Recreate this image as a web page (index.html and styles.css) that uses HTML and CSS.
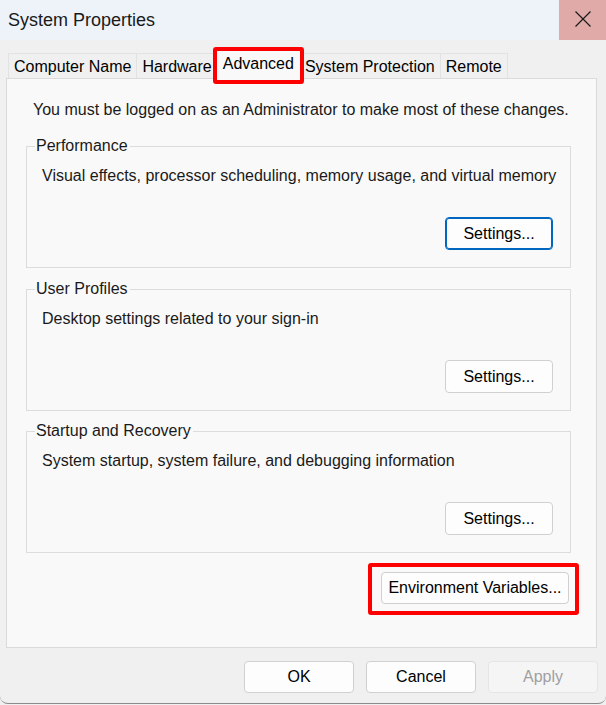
FILE: index.html
```html
<!DOCTYPE html>
<html>
<head>
<meta charset="utf-8">
<link rel="stylesheet" href="styles.css">
</head>
<body>
<div class="window">
  <div class="titlebar">
    <div class="title">System Properties</div>
    <div class="close">
      <svg width="16" height="16" viewBox="0 0 16 16"><path d="M0.5 0.5 L15.5 15.5 M15.5 0.5 L0.5 15.5" stroke="#1a1a1a" stroke-width="1.2" fill="none"/></svg>
    </div>
  </div>
  <div class="body">
    <div class="tabs">
      <div class="tab">Computer Name</div>
      <div class="tab">Hardware</div>
      <div class="tab selected">Advanced<span class="mark mark-tab"></span></div>
      <div class="tab">System Protection</div>
      <div class="tab">Remote</div>
    </div>
    <div class="panel">
      <p class="note">You must be logged on as an Administrator to make most of these changes.</p>
      <fieldset class="group first">
        <legend>Performance</legend>
        <p class="desc">Visual effects, processor scheduling, memory usage, and virtual memory</p>
        <div class="actions"><button class="btn focused">Settings...</button></div>
      </fieldset>
      <fieldset class="group">
        <legend>User Profiles</legend>
        <p class="desc">Desktop settings related to your sign-in</p>
        <div class="actions"><button class="btn">Settings...</button></div>
      </fieldset>
      <fieldset class="group">
        <legend>Startup and Recovery</legend>
        <p class="desc">System startup, system failure, and debugging information</p>
        <div class="actions"><button class="btn">Settings...</button></div>
      </fieldset>
      <div class="env-row">
        <div class="env-wrap"><button class="btn env">Environment Variables...</button><span class="mark mark-env"></span></div>
      </div>
    </div>
    <div class="footer">
      <button class="btn dlg">OK</button>
      <button class="btn dlg">Cancel</button>
      <button class="btn dlg disabled">Apply</button>
    </div>
  </div>
</div>
</body>
</html>
```
FILE: styles.css
```css
* { box-sizing: border-box; }
html, body { margin: 0; padding: 0; }
body {
  width: 606px;
  height: 705px;
  overflow: hidden;
  background: #f0f0f0;
  font-family: "Liberation Sans", Arial, sans-serif;
  font-size: 16px;
  color: #000;
}
.window {
  width: 606px;
  height: 704px;
  background: #f0f0f0;
  border-bottom: 1px solid #8a8a8a;
  border-bottom-left-radius: 8px;
  border-bottom-right-radius: 8px;
  display: flex;
  flex-direction: column;
}
.titlebar {
  height: 40px;
  background: #eef3fa;
  display: flex;
  align-items: center;
  justify-content: space-between;
}
.title {
  padding-left: 8px;
  font-size: 18px;
  color: #1a1a1a;
}
.close {
  width: 47px;
  height: 40px;
  background: #e0aaa9;
  display: flex;
  align-items: center;
  justify-content: center;
}
.close svg { display: block; margin-top: -3px; }
.body {
  padding: 13px 9px 0 6px;
  display: flex;
  flex-direction: column;
}
.tabs {
  display: flex;
  height: 25px;
  padding-left: 2px;
  position: relative;
  z-index: 2;
}
.tab {
  height: 25px;
  line-height: 25px;
  padding: 0 5px;
  border: 1px solid #e2e2e2;
  border-bottom: none;
  border-right: none;
  background: #f0f0f0;
  color: #000;
  white-space: nowrap;
  position: relative;
}
.tab:last-child { border-right: 1px solid #e2e2e2; }
.tab.selected {
  height: 30px;
  margin-top: -4px;
  margin-left: -2px;
  margin-right: -2px;
  padding: 0 7px;
  line-height: 28px;
  background: #f9f9f9;
  border: 1px solid #dadada;
  border-bottom: none;
  z-index: 3;
}
.tab.selected + .tab { border-left: none; }
.mark {
  position: absolute;
  border: 4px solid #ff0000;
  border-radius: 3px;
  pointer-events: none;
}
.mark-tab {
  left: -3px;
  right: -3px;
  top: -3px;
  bottom: -5px;
}
.panel {
  height: 570px;
  background: #f9f9f9;
  border: 1px solid #dadada;
  padding: 21px 25px 0 19px;
  position: relative;
  z-index: 1;
}
.note {
  margin: 0 0 16px 7px;
  line-height: 20px;
  color: #1a1a1a;
  white-space: nowrap;
}
.group {
  margin: 0 0 10px 0;
  padding: 0 17px 0 15px;
  border: 1px solid #dcdcdc;
  height: 132px;
  min-inline-size: 0;
}
.group.first { margin-bottom: 11px; }
.group legend {
  margin-left: -7px;
  padding: 0 2px 0 1px;
  line-height: 20px;
  color: #1a1a1a;
}
.desc {
  margin: 10px 0 0 0;
  line-height: 20px;
  color: #1a1a1a;
  white-space: nowrap;
}
.actions {
  display: flex;
  justify-content: flex-end;
  margin-top: 31px;
}
.btn {
  font-family: inherit;
  font-size: 16px;
  color: #000;
  background: #fdfdfd;
  border: 1px solid #d0d0d0;
  border-radius: 4px;
  height: 32px;
  padding: 0;
  cursor: default;
}
.group .btn { width: 108px; height: 33px; }
.btn.focused { border: 1px solid #0067c0; box-shadow: inset 0 0 0 1px #0067c0; }
.env-row {
  display: flex;
  justify-content: flex-end;
  margin-top: 19px;
  padding-right: 2px;
}
.env-wrap { position: relative; }
.btn.env { width: 188px; display: block; }
.mark-env {
  left: -13px;
  right: -10px;
  top: -9px;
  bottom: -11px;
}
.footer {
  display: flex;
  justify-content: flex-end;
  gap: 12px;
  margin-top: 13px;
  margin-right: -1px;
}
.btn.dlg { width: 110px; }
.btn.disabled {
  background: #f5f5f5;
  border-color: #e5e5e5;
  color: #a0a0a0;
}
```
